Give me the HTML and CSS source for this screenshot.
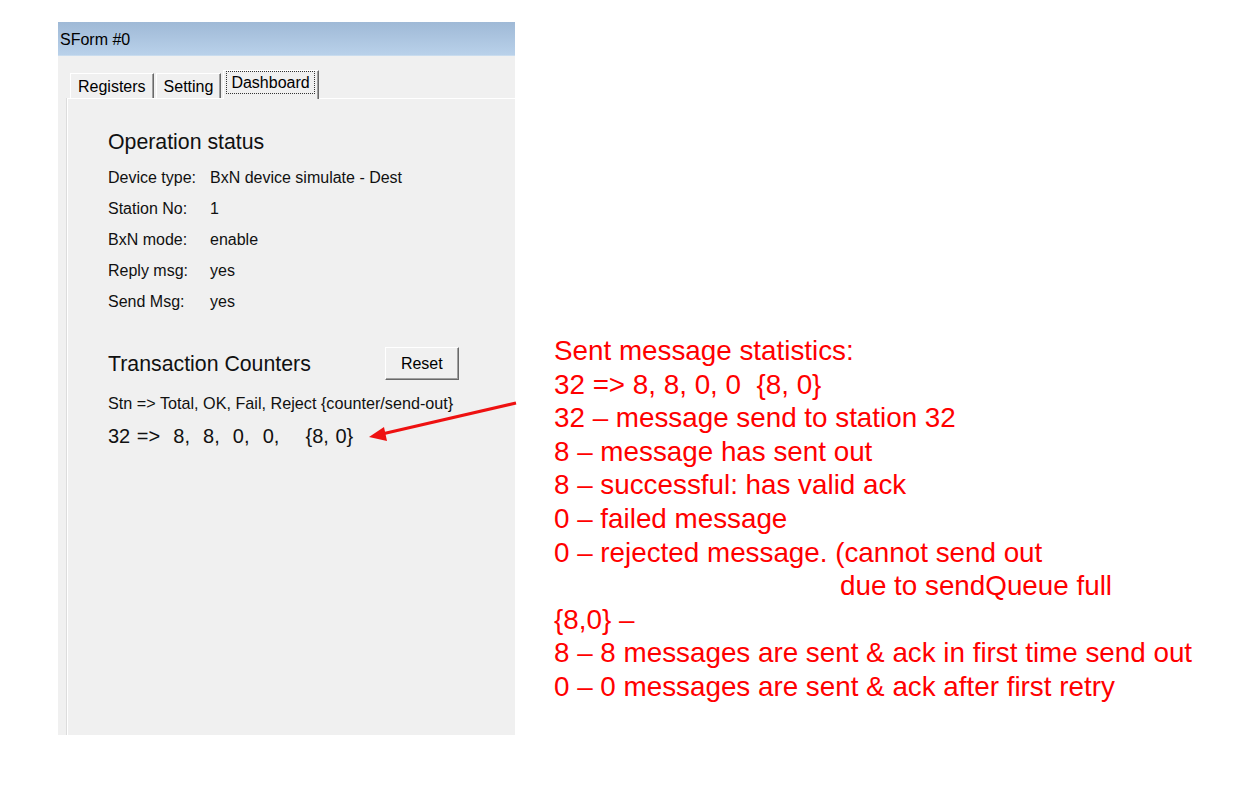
FILE: index.html
```html
<!DOCTYPE html>
<html>
<head>
<meta charset="utf-8">
<link rel="stylesheet" href="styles.css">
</head>
<body>
<div class="page">
  <div class="window">
    <div class="titlebar">SForm #0</div>
    <div class="client">
      <div class="tabstrip">
        <div class="tab">Registers</div>
        <div class="tab">Setting</div>
        <div class="tab active"><span class="focus">Dashboard</span></div>
      </div>
      <div class="tabpanel">
        <div class="heading">Operation status</div>
        <div class="grid">
          <div>Device type:</div><div>BxN device simulate - Dest</div>
          <div>Station No:</div><div>1</div>
          <div>BxN mode:</div><div>enable</div>
          <div>Reply msg:</div><div>yes</div>
          <div>Send Msg:</div><div>yes</div>
        </div>
        <div class="txrow">
          <div class="heading">Transaction Counters</div>
          <div class="btn">Reset</div>
        </div>
        <div class="legend">Stn =&gt; Total, OK, Fail, Reject {counter/send-out}</div>
        <div class="counter">32 =&gt;  8,  8,  0,  0,    {8, 0}</div>
      </div>
    </div>
  </div>
  <div class="notes">
    <div>Sent message statistics:</div>
    <div>32 =&gt; 8, 8, 0, 0&nbsp; {8, 0}</div>
    <div>32 – message send to station 32</div>
    <div>8 – message has sent out</div>
    <div>8 – successful: has valid ack</div>
    <div>0 – failed message</div>
    <div>0 – rejected message. (cannot send out</div>
    <div class="indent">due to sendQueue full</div>
    <div>{8,0} –</div>
    <div>8 – 8 messages are sent &amp; ack in first time send out</div>
    <div>0 – 0 messages are sent &amp; ack after first retry</div>
  </div>
  <svg class="arrow" width="1254" height="798" viewBox="0 0 1254 798">
    <line x1="516" y1="403" x2="382" y2="434" stroke="#ee1111" stroke-width="3"/>
    <polygon points="369,437 384,427 387,441" fill="#ee1111"/>
  </svg>
</div>
</body>
</html>
```
FILE: styles.css
```css
html, body {
  margin: 0;
  padding: 0;
  background: #ffffff;
}
.page {
  position: relative;
  width: 1254px;
  height: 798px;
  display: flex;
  align-items: flex-start;
  font-family: "Liberation Sans", Arial, sans-serif;
}
.window {
  margin-left: 58px;
  margin-top: 22px;
  width: 457px;
  height: 713px;
  display: flex;
  flex-direction: column;
  background: #f0f0f0;
  overflow: hidden;
}
.titlebar {
  height: 34px;
  line-height: 35px;
  padding-left: 2px;
  font-size: 16px;
  color: #000;
  background: linear-gradient(#9fb9d6, #b9d1ea);
  border-bottom: 1px solid #c9dcee;
  box-sizing: border-box;
}
.client {
  flex: 1;
  display: flex;
  flex-direction: column;
  padding-left: 9px;
}
.tabstrip {
  display: flex;
  align-items: flex-end;
  height: 42px;
  padding-left: 3px;
}
.tab {
  height: 24px;
  line-height: 25px;
  padding: 0 7px 0 7px;
  font-size: 16px;
  color: #000;
  border-top: 1px solid #ffffff;
  border-left: 1px solid #ffffff;
  border-right: 1px solid #696969;
  box-shadow: inset -1px 0 #a0a0a0;
  margin-right: 2px;
}
.tab.active {
  height: 28px;
  line-height: 24px;
  padding: 0 3px 0 2px;
  margin-bottom: -1px;
  background: #f0f0f0;
  position: relative;
  z-index: 1;
}
.focus {
  display: inline-block;
  padding: 0 4px;
  line-height: 21px;
  border: 1px dotted #333;
}
.tabpanel {
  flex: 1;
  border-top: 1px solid #ffffff;
  border-left: 1px solid #ffffff;
  box-shadow: -1px 0 #dcdcdc;
  padding-left: 40px;
  color: #000;
}
.heading {
  font-size: 21.3px;
  line-height: 24px;
  margin-top: 31px;
  color: #111;
}
.grid {
  display: grid;
  grid-template-columns: 102px auto;
  grid-auto-rows: 31px;
  align-items: center;
  font-size: 16px;
  margin-top: 8px;
  color: #111;
}
.txrow {
  display: flex;
  align-items: center;
  margin-top: 30px;
  height: 33px;
}
.txrow .heading {
  margin-top: 0;
  flex: none;
}
.btn {
  margin-left: 74px;
  width: 72px;
  height: 31px;
  line-height: 31px;
  text-align: center;
  font-size: 16px;
  background: #f0f0f0;
  border-top: 1px solid #ffffff;
  border-left: 1px solid #ffffff;
  border-right: 1px solid #696969;
  border-bottom: 1px solid #696969;
  box-shadow: inset -1px -1px #a0a0a0;
}
.legend {
  font-size: 16.2px;
  line-height: 24px;
  margin-top: 11px;
  color: #111;
}
.counter {
  white-space: pre;
  font-size: 20px;
  word-spacing: 1px;
  line-height: 28px;
  margin-top: 7px;
  color: #111;
}
.notes {
  margin-left: 39px;
  margin-top: 334px;
  font-size: 27.8px;
  line-height: 33.6px;
  color: #ff0000;
  white-space: nowrap;
}
.indent {
  padding-left: 286px;
}
.arrow {
  position: absolute;
  left: 0;
  top: 0;
  pointer-events: none;
}
```
